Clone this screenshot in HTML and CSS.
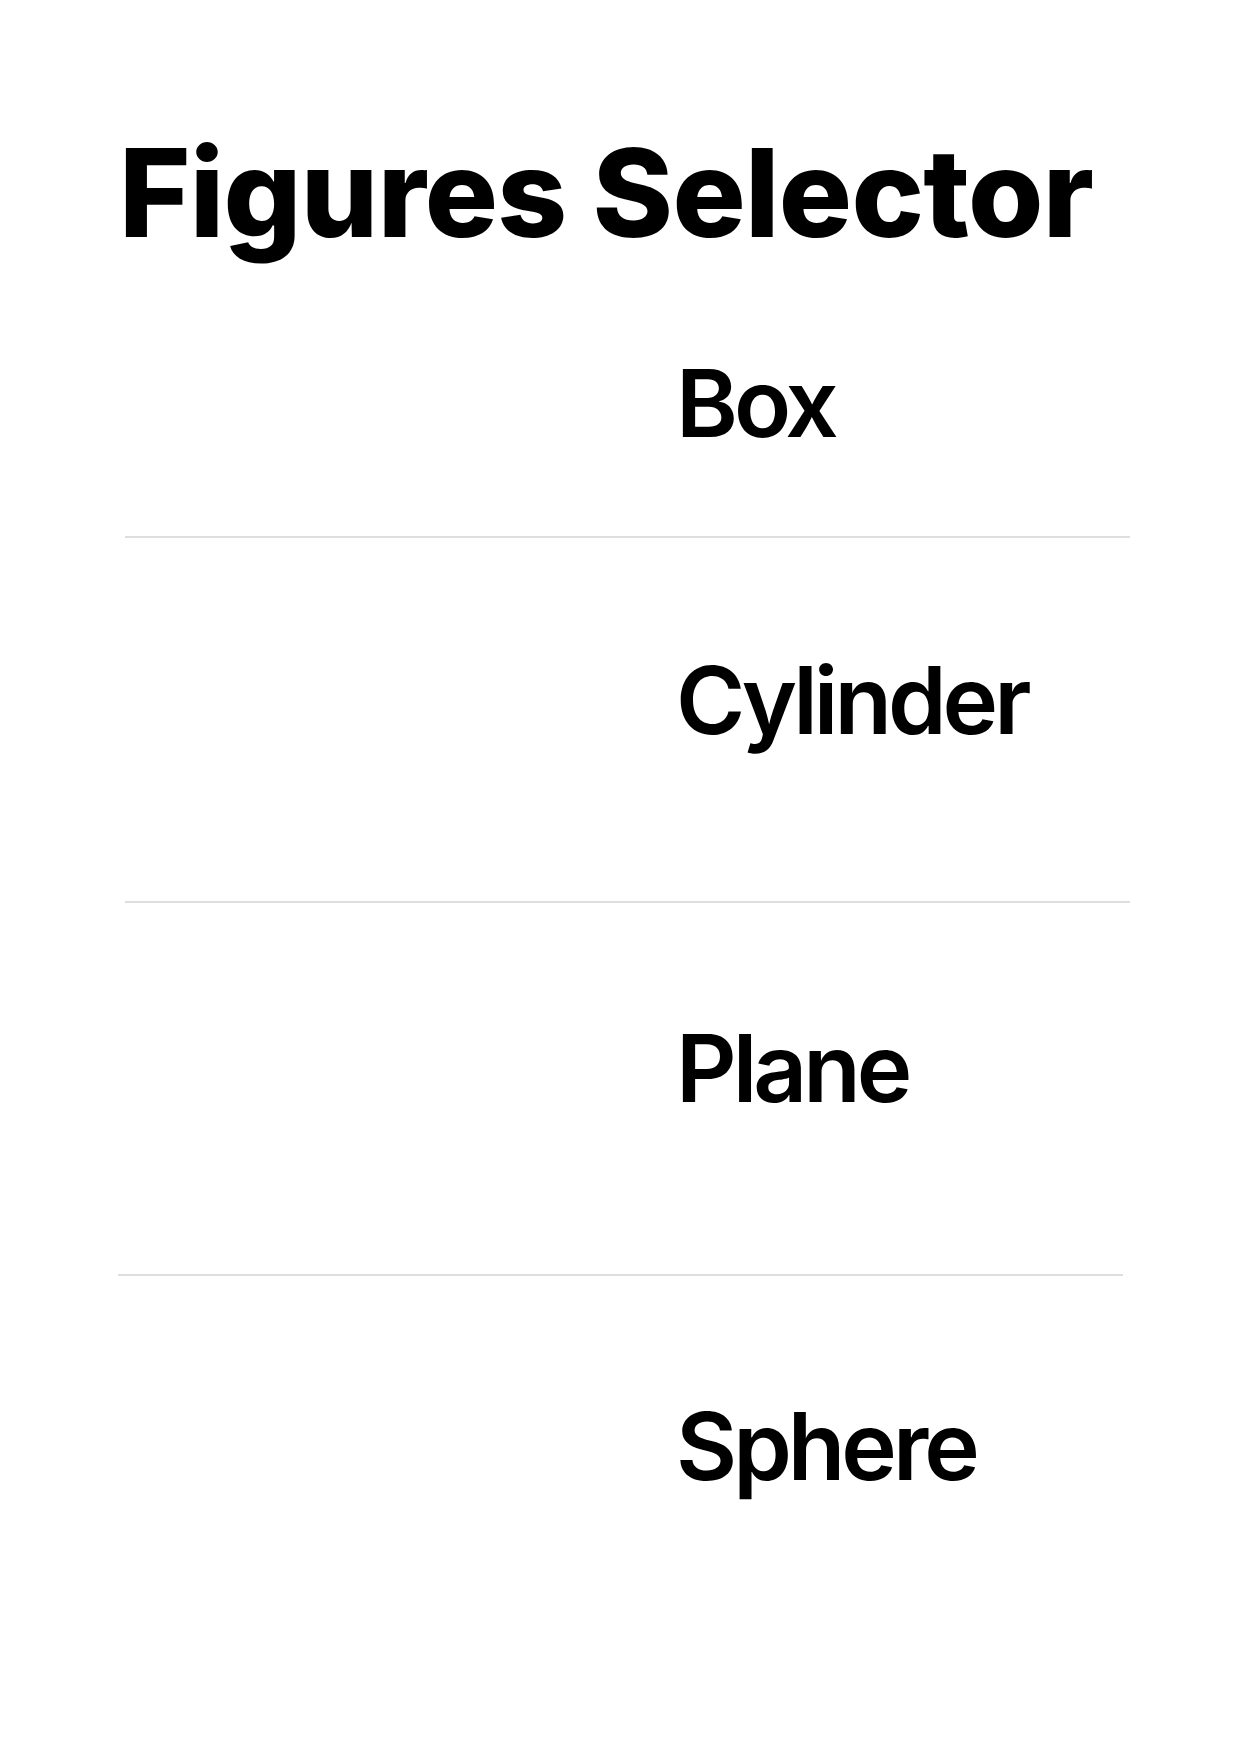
FILE: index.html
```html
<!DOCTYPE html>
<html lang="en">
<head>
<meta charset="utf-8">
<title>Figures Selector</title>
<link rel="stylesheet" href="styles.css">
</head>
<body>
<main class="page">
  <h1 class="title">Figures Selector</h1>
  <ul class="figures">
    <li class="figure figure--box"><div class="figure__media"></div><span class="figure__name">Box</span></li>
    <li class="figure figure--cylinder"><div class="figure__media"></div><span class="figure__name">Cylinder</span></li>
    <li class="figure figure--plane"><div class="figure__media"></div><span class="figure__name">Plane</span></li>
    <li class="figure figure--sphere"><div class="figure__media"></div><span class="figure__name">Sphere</span></li>
  </ul>
</main>
</body>
</html>
```

FILE: styles.css
```css
html, body {
  margin: 0;
  padding: 0;
  background: #ffffff;
}

body {
  font-family: Inter, "Noto Sans", "Liberation Sans", sans-serif;
  color: #000000;
}

.page {
  padding: 132px 0 0 125px;
  width: 1005px;
}

.title {
  margin: 0 0 0 -6px;
  font-size: 122px;
  line-height: 1;
  font-weight: 800;
  letter-spacing: -0.7px;
  white-space: nowrap;
}

.figures {
  list-style: none;
  margin: 0;
  padding: 0;
}

.figure {
  display: grid;
  grid-template-columns: 551px 1fr;
  border-bottom: 2px solid #dedede;
}

.figure__name {
  font-size: 94px;
  line-height: 1;
  font-weight: 600;
  letter-spacing: -4px;
}

.figure--box {
  padding: 102px 0 86px;
}

.figure--cylinder {
  padding: 115px 0 154px;
}

.figure--plane {
  padding: 118px 0 159px;
  margin: 0 7px 0 -7px;
}

.figure--plane .figure__name {
  margin-left: 7px;
}

.figure--sphere {
  padding: 123px 0 120px;
  border-bottom: none;
}
```
